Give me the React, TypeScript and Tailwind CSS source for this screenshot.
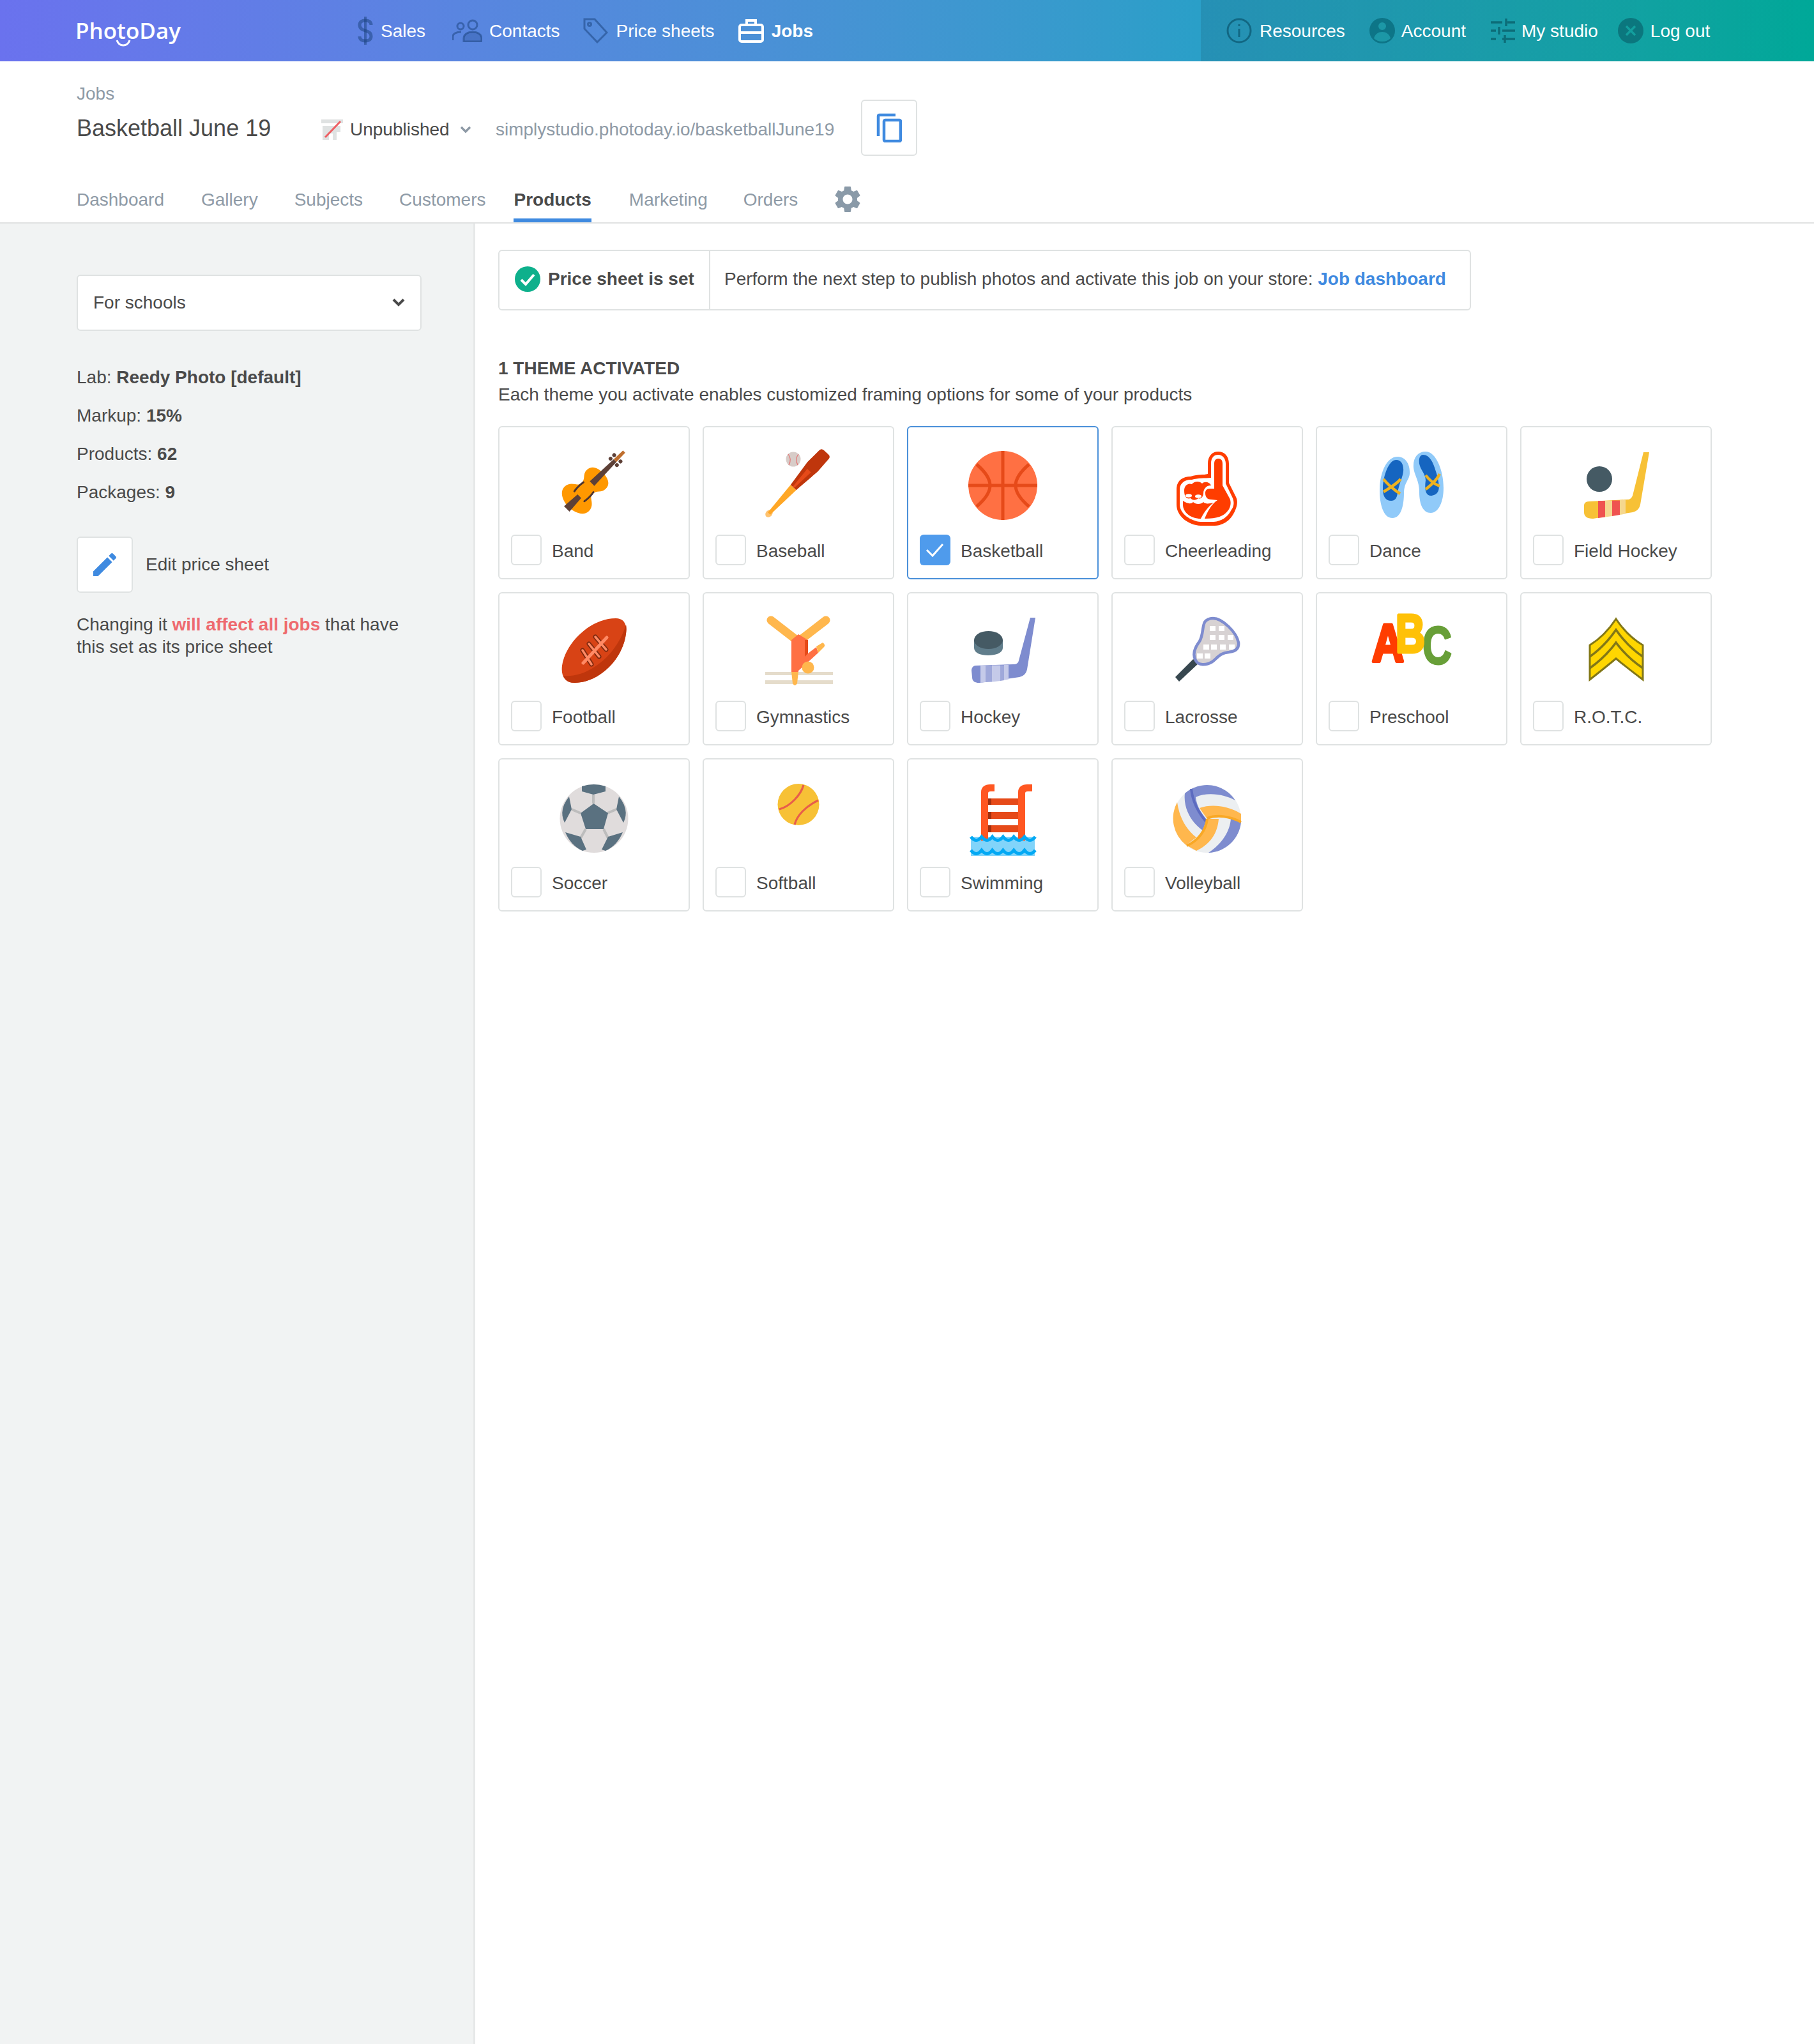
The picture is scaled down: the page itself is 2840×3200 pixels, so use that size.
import React from "react";

const W = ({ children }: { children: React.ReactNode }) => (
  <svg viewBox="0 0 108 131" width={108} height={131} className="overflow-visible shrink-0">{children}</svg>
);

const Band = () => (
  <W>
    <g transform="translate(41 61) rotate(45)">
      <path d="M0 -38 C-10 -38 -21 -35 -21 -23 C-21 -13 -12 -13 -12 -2 C-12 5 -27 6 -27 20 C-27 32 -12 38 0 38 C12 38 27 32 27 20 C27 6 12 5 12 -2 C12 -13 21 -13 21 -23 C21 -35 10 -38 0 -38Z" fill="#ff9800" />
      <path d="M-5 -14 L5 -14 L3 -65 L-3 -65Z" fill="#5d4037" />
      <path d="M-3 -65 L3 -65 L2.5 -85 L-2.5 -85Z" fill="#bf6f2e" />
      <path d="M-6 42 L6 42 L4 14 L-4 14Z" fill="#5d4037" />
      <circle cx="-7" cy="-70" r="3" fill="#5d4037" /><circle cx="7" cy="-70" r="3" fill="#5d4037" />
      <circle cx="-7" cy="-62" r="3" fill="#5d4037" /><circle cx="7" cy="-62" r="3" fill="#5d4037" />
      <path d="M-11 -6 Q-13 4 -11 14" stroke="#4e342e" strokeWidth="3" fill="none" strokeLinecap="round" />
      <path d="M11 -6 Q13 4 11 14" stroke="#4e342e" strokeWidth="3" fill="none" strokeLinecap="round" />
    </g>
  </W>
);

const Baseball = () => (
  <W>
    <circle cx="46" cy="13" r="11.5" fill="#d7ccc8" />
    <path d="M38 5 Q44 13 39 22 M54 5 Q48 13 53 22" stroke="#e57373" strokeWidth="1.2" fill="none" />
    <g transform="translate(8 98) rotate(43)">
      <ellipse cx="0" cy="0" rx="5" ry="6.5" fill="#ffc370" />
      <path d="M-2.5 0 L2.5 0 L6 -56 L-6 -56Z" fill="#ffa726" />
      <path d="M-6 -56 L6 -56 L11 -100 L10 -126 Q10 -131 5 -131 L-5 -131 Q-10 -131 -10 -126 L-11 -100Z" fill="#bf360c" />
      <path d="M-1.5 -56 L1.5 -56 L4 -92 L-4 -92Z" fill="#e64a19" />
    </g>
  </W>
);

const Basketball = () => (
  <W>
    <circle cx="54" cy="54" r="54" fill="#ff7043" />
    <path d="M54 0 V108 M0 54 H108 M13 21 C27 33 34 43 34 54 C34 65 27 75 13 87 M95 21 C81 33 74 43 74 54 C74 65 81 75 95 87" stroke="#e64a19" strokeWidth="5" fill="none" />
  </W>
);

const Cheer = () => (
  <W>
    <path d="M55 20 C55 8 62 1 71 1 C81 1 88 8 88 20 V50 L99 72 C102 78 101 84 99 90 C94 104 84 116 66 117 H44 C24 116 6 102 6 84 V60 C6 46 16 40 28 40 C40 36 48 38 55 36Z" fill="#ff3d00" />
    <path d="M60 20 C60 10 65 6 71 6 C78 6 83 12 83 20 V51 L94 74 C97 82 95 88 92 92 C86 104 76 110 64 111 H44 C28 110 11 98 11 84 V60 C11 50 20 44 30 45 C40 42 50 43 60 42Z" fill="#fff" />
    <path d="M65 20 C65 14 68 12 71.5 12 C75 12 78 14 78 20 V54 L89 74 C92 80 91 88 86 94 C80 102 70 106 50 106 C54 96 60 84 70 77 L60 76 C54 76 51 72 51 66 C51 62 53 59 58 59 H65Z" fill="#ff3d00" />
    <path d="M16 78 C22 82 28 84 32 80 C36 84 44 84 48 80 C52 84 58 82 64 81 C54 88 48 98 44 106 C28 106 16 96 16 84Z" fill="#ff3d00" />
    <path d="M18 62 C18 54 24 50 30 52 C34 47 42 47 46 51 C50 47 58 49 60 54 C52 54 48 60 48 66 C48 72 44 76 40 74 C36 78 30 77 28 74 C22 76 18 72 18 62Z" fill="#ff3d00" />
    <ellipse cx="25" cy="70" rx="5" ry="2.8" fill="#fff" />
    <ellipse cx="40" cy="71" rx="5" ry="2.8" fill="#fff" />
  </W>
);

const Dance = () => (
  <W>
    <path d="M32 9 C44 9 52 20 51 36 C50 46 42 50 42 66 C42 84 38 105 24 105 C10 105 4 84 4 62 C4 36 14 9 32 9Z" fill="#90caf9" />
    <path d="M76 1 C92 1 104 30 104 58 C104 80 96 97 84 97 C72 97 66 84 66 64 C66 46 58 38 57 26 C56 10 64 1 76 1Z" fill="#90caf9" />
    <path d="M30 14 C38 14 42 22 41 32 C40 42 34 52 32 66 C31 74 28 78 22 78 C14 78 9 72 9 60 C9 40 18 14 30 14Z" fill="#1565c0" />
    <path d="M72 6 C82 6 88 18 92 32 C96 44 98 56 96 62 C94 68 88 70 84 70 C76 70 74 60 76 46 C76 36 68 30 66 20 C65 12 67 6 72 6Z" fill="#1565c0" />
    <path d="M10 44 C16 52 28 62 36 67 M10 64 C20 58 32 50 37 44" stroke="#eeb21f" strokeWidth="4.5" fill="none" />
    <path d="M76 38 C82 46 90 52 98 55 M76 60 C84 54 94 44 98 36" stroke="#eeb21f" strokeWidth="4.5" fill="none" />
  </W>
);

const stick = "M97 2 L106 2 L92 84 C90 92 86 94 80 96 L18 106 C8 106 4 102 4 96 L4 86 C4 82 6 79 12 79 L72 76 C76 76 78 74 80 70 Z";
const FieldHockey = () => (
  <W>
    <circle cx="28" cy="44" r="20" fill="#455a64" />
    <path d={stick} fill="#f7c136" />
    <path d="M26 78 H37 V103.5 L26 105Z" fill="#ef5350" />
    <path d="M37 78 H48 V102 L37 103.5Z" fill="#f5d78e" />
    <path d="M48 77.5 H60 V100 L48 102Z" fill="#ef5350" />
    <path d="M60 77 H69 V98.5 L60 100Z" fill="#f5d78e" />
  </W>
);

const Football = () => (
  <W>
    <path d="M88 2 C100 2 106 10 104 26 C100 62 66 102 24 103 C8 103 2 92 4 76 C8 44 46 2 88 2Z" fill="#d84315" />
    <path d="M104 12 C105 16 105 20 104 26 C100 62 66 102 24 103 C15 103 9 100 6 92 C44 96 90 60 104 12Z" fill="#bf360c" />
    <g fill="none" strokeLinecap="round">
      <path d="M36 52 L50 74 M46 42 L62 62 M56 31 L73 51" stroke="#7f2a10" strokeWidth="7" />
      <path d="M36 52 L50 74 M46 42 L62 62 M56 31 L73 51" stroke="#ff8a65" strokeWidth="3.5" />
      <path d="M37 72 L74 32" stroke="#ff8a65" strokeWidth="5" />
    </g>
  </W>
);

const Gym = () => (
  <W>
    <rect x="2" y="86" width="106" height="5" fill="#e5dccb" />
    <rect x="2" y="99" width="106" height="6" fill="#e5dccb" />
    <path d="M11 5 L48.5 34 M97 5 L59.5 34" stroke="#ffb74d" strokeWidth="13" strokeLinecap="round" />
    <path d="M43 36 L54 27 L69 36 V57 L82 47 L85 56 L54 84 V86 H43Z" fill="#ff7043" />
    <path d="M64 36 L69 36 V57 L64 62Z" fill="#e64a19" />
    <path d="M82 46 L92 40 Q97 43 94 47 L85 56Z" fill="#ffb74d" />
    <path d="M43 86 H54 L52 104 Q48.5 110 45 104Z" fill="#ffb74d" />
    <ellipse cx="69" cy="79" rx="9.5" ry="9.5" fill="#ffb74d" />
  </W>
);

const Hockey = () => (
  <W>
    <path d="M9 36 H54 V48 C54 56 44 60 31 60 C18 60 9 56 9 48Z" fill="#607d8b" />
    <ellipse cx="31.5" cy="36" rx="22.5" ry="14" fill="#455a64" />
    <path d="M97 1 L105 1 L92 82 C90 90 86 92 80 94 L18 103 C8 103 6 99 6 94 L5 84 C5 79 8 76 12 76 L70 74 C76 74 78 72 79 68 Z" fill="#7e8ccf" />
    <path d="M19 76 H27 V102 L19 103Z M37 75.5 H50 V100 L37 101.5Z M56 75 H63 V97.5 L56 98.8Z" fill="#c5cae9" />
    <path d="M27 76 H37 V101.5 L27 102Z M50 75.5 H56 V99 L50 100Z" fill="#9fa8da" />
  </W>
);

const head = "M63 2 C78 2 100 24 103 40 C104 50 98 54 88 55 C74 56 70 64 62 70 C52 76 40 76 36 68 C30 58 36 46 42 38 C48 28 46 16 50 8 C53 4 58 2 63 2Z";
const Lacrosse = () => (
  <W>
    <path d="M32 66 L41 72 L10 101 L4 94Z" fill="#37474f" />
    <path d={head} fill="#d7d2d3" />
    <g fill="#fff">
      {[[58,14],[72,14],[58,28],[72,28],[86,28],[48,43],[60,43],[74,43],[88,43],[38,57],[50,57]].map(([x, y], i) => (
        <rect key={i} x={x} y={y} width="9" height="8" />
      ))}
    </g>
    <path d={head} fill="none" stroke="#7e8ccf" strokeWidth="4.5" />
  </W>
);

const Abc = () => (
  <W>
    <g fontFamily="'Liberation Sans', sans-serif" fontWeight="700" fontSize="84" strokeLinejoin="round">
      <text x="71" y="73" fill="#689f38" stroke="#689f38" strokeWidth="3" textLength="46" lengthAdjust="spacingAndGlyphs">C</text>
      <text x="-8" y="70" fill="#ff3d00" stroke="#ff3d00" strokeWidth="5" textLength="50" lengthAdjust="spacingAndGlyphs">A</text>
      <text x="29" y="55" fill="#ffc107" stroke="#ffc107" strokeWidth="5" textLength="46" lengthAdjust="spacingAndGlyphs">B</text>
    </g>
  </W>
);

const Rotc = () => (
  <W>
    <path d="M54 3 Q72 30 96 44 V98 Q72 80 54 65 Q36 80 13 98 V44 Q36 30 54 3Z" fill="#ffd600" stroke="#827717" strokeWidth="3" />
    <path d="M13 62 Q36 46 54 20 Q72 46 96 62 M13 80 Q36 64 54 40 Q72 64 96 80" fill="none" stroke="#827717" strokeWidth="3.5" />
  </W>
);

const Soccer = () => (
  <W>
    <circle cx="54" cy="55.5" r="53.5" fill="#e0dcdc" />
    <path d="M53 18 V32 M33 47 L19 41 M75 47 L89 41 M41 72 L33 86 M69 72 L76 86" stroke="#bdbdbd" strokeWidth="4" />
    <g fill="#5a7180">
      <path d="M53.5 32 L76 47 L69 72 H41 L33 47Z" />
      <path d="M35 5 Q54 -1 72 5 L72 13 L53 18 L35 13Z" />
      <path d="M15 21 L19 41 L8 62 Q-2 42 15 21Z" />
      <path d="M93 21 L89 41 L100 62 Q110 42 93 21Z" />
      <path d="M9 77 L33 84 L42 104 L36 106 Q18 98 9 77Z" />
      <path d="M99 77 L76 84 L66 104 L72 106 Q90 98 99 77Z" />
    </g>
  </W>
);

const Softball = () => (
  <W>
    <circle cx="54" cy="33.5" r="32.5" fill="#f7c136" />
    <path d="M62 3 C58 18 42 36 24 41 M85 27 C66 36 52 50 48 65" stroke="#e85d4a" strokeWidth="3.2" fill="none" />
  </W>
);

const Swim = () => (
  <W>
    <rect x="4" y="84" width="100" height="30" fill="#81d4fa" />
    <path d="M31 24 H78 V34 H31Z M31 45 H78 V56 H31Z M31 66 H78 V77 H31Z" fill="#e64a19" />
    <path d="M31 24 H36 V34 H31Z M31 45 H36 V56 H31Z M31 66 H36 V77 H31Z" fill="#a1300f" />
    <path d="M20 90 V14 C20 6 26 2 34 2 H41 V13 H35 C32 13 31 14 31 16 V90Z M78 90 V14 C78 6 84 2 92 2 H100 V13 H93 C90 13 89 14 89 16 V90Z" fill="#ff5722" />
    <path d="M4 84 q8.4 11 16.8 0 q8.4 11 16.8 0 q8.4 11 16.8 0 q8.4 11 16.8 0 q8.4 11 16.8 0 q8.4 11 16.8 0" stroke="#03a9f4" strokeWidth="5" fill="none" />
    <path d="M4 105 q8.4 11 16.8 0 q8.4 11 16.8 0 q8.4 11 16.8 0 q8.4 11 16.8 0 q8.4 11 16.8 0 q8.4 11 16.8 0" stroke="#03a9f4" strokeWidth="5" fill="none" />
  </W>
);

const Volley = () => (
  <W>
    <circle cx="54" cy="56" r="53" fill="#eceff1" />
    <path d="M19 16 A53 53 0 0 1 98 27 C82 18 55 13 36 22 C38 38 46 48 53 57 L47 74 C32 64 16 42 19 16Z" fill="#7e8ccf" />
    <path d="M29 9 C31 28 40 46 52 60" stroke="#5c6bc0" strokeWidth="4" fill="none" />
    <path d="M91 55 L107 61 A53 53 0 0 1 56 109 C76 96 90 76 91 55Z" fill="#7e8ccf" />
    <path d="M7 30 A53 53 0 0 0 21 97 L37 85 C20 72 10 52 7 30Z" fill="#ffb74d" />
    <path d="M42 39 C62 32 88 36 107 48 L107 61 C90 52 70 50 54 56Z" fill="#ffb74d" />
    <path d="M54 56 H72 C70 80 58 96 37 106 L21 97 C38 90 52 74 54 56Z" fill="#ffb74d" />
    <path d="M54 55 C70 49 90 52 107 61 M54 56 C52 74 40 90 22 98" stroke="#f9a825" strokeWidth="4" fill="none" />
  </W>
);

const themes: { name: string; Icon: () => React.ReactElement; on?: boolean }[] = [
  { name: "Band", Icon: Band },
  { name: "Baseball", Icon: Baseball },
  { name: "Basketball", Icon: Basketball, on: true },
  { name: "Cheerleading", Icon: Cheer },
  { name: "Dance", Icon: Dance },
  { name: "Field Hockey", Icon: FieldHockey },
  { name: "Football", Icon: Football },
  { name: "Gymnastics", Icon: Gym },
  { name: "Hockey", Icon: Hockey },
  { name: "Lacrosse", Icon: Lacrosse },
  { name: "Preschool", Icon: Abc },
  { name: "R.O.T.C.", Icon: Rotc },
  { name: "Soccer", Icon: Soccer },
  { name: "Softball", Icon: Softball },
  { name: "Swimming", Icon: Swim },
  { name: "Volleyball", Icon: Volley },
];

const Card = ({ name, Icon, on }: { name: string; Icon: () => React.ReactElement; on?: boolean }) => (
  <div className={`h-[240px] rounded-md border-2 bg-white flex flex-col items-center pt-[37px] ${on ? "border-[#4a90d9]" : "border-[#dfe2e2]"}`}>
    <Icon />
    <div className="self-stretch flex items-center pl-[18px] h-[48px]">
      {on ? (
        <div className="w-[48px] h-[48px] rounded-md bg-[#4f9bec] flex items-center justify-center">
          <svg viewBox="0 0 48 48" width="48" height="48"><path d="M11 24 L20 33 L36 15" stroke="#fff" strokeWidth="3" fill="none" /></svg>
        </div>
      ) : (
        <div className="w-[48px] h-[48px] rounded-md border-2 border-[#dfe2e2] bg-white" />
      )}
      <span className="ml-[16px] text-[28px] leading-[32px] pt-[4px] text-[#4a4a4a]">{name}</span>
    </div>
  </div>
);

const navStroke = "#173f7a";
const Sales = () => (
  <svg viewBox="0 0 24 44" width="24" height="44" fill="none" stroke={navStroke} strokeOpacity=".5" strokeWidth="5">
    <path d="M12 0 V44" strokeWidth="4" />
    <path d="M21 13 C21 8 17 6 12 6 C7 6 3 8 3 13 C3 25 21 19 21 31 C21 36 17 38 12 38 C7 38 3 36 3 31" />
  </svg>
);
const ContactsI = () => (
  <svg viewBox="0 0 47 36" width="47" height="36" fill="none" stroke={navStroke} strokeOpacity=".5" strokeWidth="3">
    <circle cx="32" cy="9" r="7" />
    <circle cx="13" cy="11" r="5" />
    <path d="M18 35 V30 C18 24 24 20 32 20 C40 20 46 24 46 30 V35Z" fill={navStroke} fillOpacity=".25" />
    <path d="M1 33 V27 C1 23 6 20 14 20" />
  </svg>
);
const TagI = () => (
  <svg viewBox="0 0 40 40" width="40" height="40" fill="none" stroke={navStroke} strokeOpacity=".5" strokeWidth="3">
    <path d="M3 2 H19 L38 23 L23 38 L3 17Z" />
    <circle cx="11" cy="10" r="2.5" />
  </svg>
);
const JobsI = () => (
  <svg viewBox="0 0 40 38" width="40" height="38" fill="none" stroke="#fff" strokeWidth="4">
    <rect x="2" y="10" width="36" height="26" rx="3" />
    <path d="M13 10 V3 H27 V10 M2 22 H38" />
  </svg>
);
const ResI = () => (
  <svg viewBox="0 0 40 40" width="40" height="40" fill="none" stroke="#0a566e" strokeOpacity=".7" strokeWidth="3">
    <circle cx="20" cy="20" r="18" />
    <path d="M20 17 V30 M20 10 V13" />
  </svg>
);
const AccI = () => (
  <svg viewBox="0 0 40 40" width="40" height="40">
    <circle cx="20" cy="20" r="20" fill="#0a6f80" fillOpacity=".85" />
    <circle cx="20" cy="13" r="6" fill="#1c97a6" />
    <path d="M7 32 C9 25 14 22 20 22 C26 22 31 25 33 32 C30 35 25 37 20 37 C15 37 10 35 7 32Z" fill="#1c97a6" />
  </svg>
);
const StudioI = () => (
  <svg viewBox="0 0 38 38" width="38" height="38" fill="none" stroke="#0a6570" strokeOpacity=".85" strokeWidth="3.5">
    <path d="M0 6 H18 M26 6 H38 M24 0 V12 M0 19 H8 M18 19 H38 M13 13 V25 M0 32 H8 M18 32 H38 M22 26 V38" />
  </svg>
);
const OutI = () => (
  <svg viewBox="0 0 40 40" width="40" height="40">
    <circle cx="20" cy="20" r="20" fill="#0a7078" fillOpacity=".85" />
    <path d="M13 13 L27 27 M27 13 L13 27" stroke="#139f9e" strokeWidth="3.5" />
  </svg>
);

const NavItem = ({ icon, label, cls = "", iconCls = "" }: { icon: React.ReactNode; label: string; cls?: string; iconCls?: string }) => (
  <div className={`flex items-center ${cls}`}>
    <span className={`flex items-center ${iconCls}`}>{icon}</span>
    <span className="pt-[2px]">{label}</span>
  </div>
);

const Tab = ({ label, cls = "", active = false }: { label: string; cls?: string; active?: boolean }) => (
  <div className={`h-[56px] pt-[5px] leading-[32px] ${active ? "font-bold text-[#4a4a4a] border-b-[6px] border-[#3f8ae0]" : "text-[#8e9aa6]"} ${cls}`}>{label}</div>
);

const B = ({ children }: { children: React.ReactNode }) => <b className="font-bold">{children}</b>;

export default function App() {
  return (
    <div className="w-[2840px] h-[3200px] flex flex-col bg-white text-[28px] text-[#4a4a4a] [font-family:'Liberation_Sans',sans-serif]">
      <header className="h-[96px] shrink-0 flex items-stretch text-white bg-gradient-to-r from-[#6a72ee] via-[#2a9fc8] via-66% to-[#00a898]">
        <div className="flex-1 flex items-center pl-[118px]">
          <div className="relative w-[442px] text-[35px] font-semibold [font-family:'Open_Sans',sans-serif]">
            PhotoDay
            <svg viewBox="0 0 24 14" width="24" height="14" className="absolute left-[63px] top-[38px]">
              <path d="M2 3 C4 9 8 11 12 11 C16 11 20 9 22 3" stroke="#fff" strokeWidth="3" fill="none" />
            </svg>
          </div>
          <NavItem icon={<Sales />} label="Sales" iconCls="mr-[12px]" cls="" />
          <NavItem icon={<ContactsI />} label="Contacts" iconCls="mr-[11px]" cls="ml-[42px]" />
          <NavItem icon={<TagI />} label="Price sheets" iconCls="mr-[13px]" cls="ml-[35px]" />
          <NavItem icon={<JobsI />} label="Jobs" iconCls="mr-[12px]" cls="ml-[37px] font-bold" />
        </div>
        <div className="w-[960px] flex items-center pl-[40px] bg-gradient-to-r from-[#00000018] to-[#00000000]">
          <NavItem icon={<ResI />} label="Resources" iconCls="mr-[12px]" />
          <NavItem icon={<AccI />} label="Account" iconCls="mr-[10px]" cls="ml-[38px]" />
          <NavItem icon={<StudioI />} label="My studio" iconCls="mr-[10px]" cls="ml-[39px]" />
          <NavItem icon={<OutI />} label="Log out" iconCls="mr-[11px]" cls="ml-[31px]" />
        </div>
      </header>

      <section className="h-[254px] shrink-0 border-b-2 border-[#e0e2e2] pl-[120px] pt-[35px]">
        <div className="h-[25px] leading-[32px] text-[#8e9aa6]">Jobs</div>
        <div className="h-[88px] flex items-center">
          <h1 className="w-[383px] text-[36px] font-normal leading-[40px] mt-[2px]">Basketball June 19</h1>
          <svg viewBox="0 0 34 32" width="34" height="32" className="mt-[6px] shrink-0">
            <path d="M0 0 H34 V6 H0Z M2 10 H30 V20 H24 V32 H18 V22 H12 V32 H2Z" fill="#dfe2e2" />
            <path d="M6 28 L30 3" stroke="#ee5f63" strokeWidth="3" />
          </svg>
          <span className="ml-[11px] mt-[6px] w-[172px] shrink-0">Unpublished</span>
          <svg viewBox="0 0 18 12" width="18" height="12" className="mt-[6px] shrink-0">
            <path d="M2 2 L9 9 L16 2" stroke="#8e9aa6" strokeWidth="3.5" fill="none" />
          </svg>
          <span className="ml-[38px] w-[572px] mt-[6px] text-[#8e9aa6] shrink-0">simplystudio.photoday.io/basketballJune19</span>
          <div className="w-[88px] h-[88px] rounded-md border-2 border-[#dfe2e2] flex items-center justify-center">
            <svg viewBox="0 0 40 46" width="40" height="46" fill="none" stroke="#3f8ae0" strokeWidth="4.5">
              <path d="M3 36 V5 Q3 3 5 3 H30" />
              <rect x="12" y="11" width="26" height="33" rx="2" />
            </svg>
          </div>
        </div>
        <nav className="mt-[48px] flex items-start">
          <Tab label="Dashboard" />
          <Tab label="Gallery" cls="ml-[58px]" />
          <Tab label="Subjects" cls="ml-[57px]" />
          <Tab label="Customers" cls="ml-[57px]" />
          <Tab label="Products" active cls="ml-[44px]" />
          <Tab label="Marketing" cls="ml-[59px]" />
          <Tab label="Orders" cls="ml-[56px]" />
          <svg viewBox="2.4 2.4 19.2 19.2" width="40" height="40" className="ml-[58px]" fill="#8a9aa8">
            <path d="M19.14 12.94c.04-.3.06-.61.06-.94 0-.32-.02-.64-.07-.94l2.03-1.58c.18-.14.23-.41.12-.61l-1.92-3.32c-.12-.22-.37-.29-.59-.22l-2.39.96c-.5-.38-1.03-.7-1.62-.94l-.36-2.54c-.04-.24-.24-.41-.48-.41h-3.84c-.24 0-.43.17-.47.41l-.36 2.54c-.59.24-1.13.57-1.62.94l-2.39-.96c-.22-.08-.47 0-.59.22L2.74 8.87c-.12.21-.08.47.12.61l2.03 1.58c-.05.3-.09.63-.09.94s.02.64.07.94l-2.03 1.58c-.18.14-.23.41-.12.61l1.92 3.32c.12.22.37.29.59.22l2.39-.96c.5.38 1.03.7 1.62.94l.36 2.54c.05.24.24.41.48.41h3.84c.24 0 .44-.17.47-.41l.36-2.54c.59-.24 1.13-.56 1.62-.94l2.39.96c.22.08.47 0 .59-.22l1.92-3.32c.12-.22.07-.47-.12-.61l-2.01-1.58zM12 15.6c-1.98 0-3.6-1.62-3.6-3.6s1.62-3.6 3.6-3.6 3.6 1.62 3.6 3.6-1.62 3.6-3.6 3.6z" />
          </svg>
        </nav>
      </section>

      <div className="flex-1 flex">
        <aside className="w-[744px] shrink-0 bg-[#f1f3f3] border-r-[3px] border-[#e6e8e8] pl-[120px] pr-[81px] pt-[80px] leading-[32px]">
          <div className="h-[88px] rounded-md border-2 border-[#dfe2e2] bg-white flex items-center justify-between pl-[24px] pr-[24px]">
            <span>For schools</span>
            <svg viewBox="0 0 20 14" width="20" height="14"><path d="M2 2 L10 10 L18 2" stroke="#4a4a4a" strokeWidth="4" fill="none" /></svg>
          </div>
          <div className="mt-[57px] flex flex-col gap-[28px]">
            <div>Lab: <B>Reedy Photo [default]</B></div>
            <div>Markup: <B>15%</B></div>
            <div>Products: <B>62</B></div>
            <div>Packages: <B>9</B></div>
          </div>
          <div className="mt-[53px] flex items-center">
            <div className="w-[88px] h-[88px] rounded-md border-2 border-[#dfe2e2] bg-white flex items-center justify-center">
              <svg viewBox="0 0 24 24" width="48" height="48" fill="#3f8ae0">
                <path d="M3 17.25V21h3.75L17.81 9.94l-3.75-3.75L3 17.25zM20.71 7.04c.39-.39.39-1.02 0-1.41l-2.34-2.34c-.39-.39-1.02-.39-1.41 0l-1.83 1.83 3.75 3.75 1.83-1.83z" />
              </svg>
            </div>
            <span className="ml-[20px]">Edit price sheet</span>
          </div>
          <p className="mt-[32px] leading-[35px]">
            Changing it <b className="font-bold text-[#ee6a6f]">will affect all jobs</b> that have this set as its price sheet
          </p>
        </aside>

        <main className="flex-1 pl-[36px] pt-[41px]">
          <div className="w-[1523px] h-[95px] rounded-md border-2 border-[#dfe2e2] flex items-stretch">
            <div className="w-[330px] border-r-2 border-[#dfe2e2] flex items-center pl-[24px] pb-[4px] shrink-0">
              <svg viewBox="0 0 40 40" width="40" height="40" className="shrink-0">
                <circle cx="20" cy="20" r="20" fill="#0eb08c" />
                <path d="M10 21 L17 28 L30 13" stroke="#fff" strokeWidth="4" fill="none" />
              </svg>
              <b className="ml-[12px] font-bold whitespace-nowrap">Price sheet is set</b>
            </div>
            <div className="flex items-center pl-[22px] pb-[4px] whitespace-nowrap">
              <span>Perform the next step to publish photos and activate this job on your store: <b className="font-bold text-[#3f8ae0]">Job dashboard</b></span>
            </div>
          </div>
          <h2 className="mt-[75px] font-bold leading-[32px]">1 THEME ACTIVATED</h2>
          <p className="mt-[9px] leading-[32px]">Each theme you activate enables customized framing options for some of your products</p>
          <div className="mt-[33px] grid grid-cols-[repeat(6,300px)] gap-[20px]">
            {themes.map((t) => (
              <Card key={t.name} {...t} />
            ))}
          </div>
        </main>
      </div>
    </div>
  );
}
